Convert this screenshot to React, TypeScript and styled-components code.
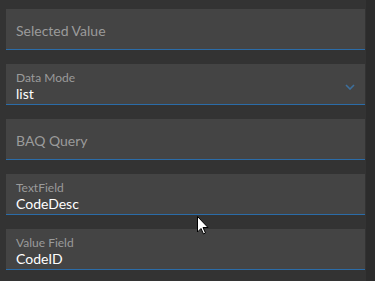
import React from "react";
import styled, { createGlobalStyle } from "styled-components";

const Global = createGlobalStyle`
  html, body { margin: 0; padding: 0; background: #333333; }
  body { font-family: Lato, "Noto Sans", sans-serif; }
`;

const Page = styled.div`
  display: grid;
  grid-template-columns: 366px 1fr;
  width: 375px;
  height: 281px;
  overflow: hidden;
  position: relative;
`;

const Main = styled.div`
  display: flex;
  flex-direction: column;
  gap: 14px;
  padding: 9px 1px 0 6px;
  background: #333333;
`;

const Strip = styled.div`
  background: #2c2c2c;
`;

const Field = styled.div`
  position: relative;
  height: 41px;
  box-sizing: border-box;
  background: #444444;
  border-bottom: 1px solid #2b6ca8;
  display: flex;
  flex-direction: column;
  justify-content: center;
  padding: 3px 10px 0;
`;

const Placeholder = styled.div`
  color: #9b9b9b;
  font-size: 14px;
  line-height: 16px;
`;

const Label = styled.div`
  color: #9b9b9b;
  font-size: 12px;
  line-height: 15px;
`;

const Value = styled.div`
  color: #ffffff;
  font-size: 14px;
  line-height: 17px;
`;

const Chevron = styled.svg`
  position: absolute;
  right: 10px;
  top: 20px;
`;

const Cursor = styled.svg`
  position: absolute;
  left: 197px;
  top: 216px;
`;

const PlainField = ({ text }: { text: string }) => (
  <Field>
    <Placeholder>{text}</Placeholder>
  </Field>
);

const LabeledField = ({ label, value, select }: { label: string; value: string; select?: boolean }) => (
  <Field>
    <Label>{label}</Label>
    <Value>{value}</Value>
    {select && (
      <Chevron width="10" height="6" viewBox="0 0 10 6">
        <path d="M1 1 L5 5 L9 1" fill="none" stroke="#3d6f9c" strokeWidth="1.6" />
      </Chevron>
    )}
  </Field>
);

export default function App() {
  return (
    <Page>
      <Global />
      <Main>
        <PlainField text="Selected Value" />
        <LabeledField label="Data Mode" value="list" select />
        <PlainField text="BAQ Query" />
        <LabeledField label="TextField" value="CodeDesc" />
        <LabeledField label="Value Field" value="CodeID" />
      </Main>
      <Strip />
      <Cursor width="12" height="19" viewBox="0 0 12 19">
        <path d="M0.5 0.5 L0.5 16 L4 12.5 L6.5 18 L8.5 17 L6 11.5 L11 11.5 Z" fill="#ffffff" stroke="#000000" strokeWidth="1" />
      </Cursor>
    </Page>
  );
}
